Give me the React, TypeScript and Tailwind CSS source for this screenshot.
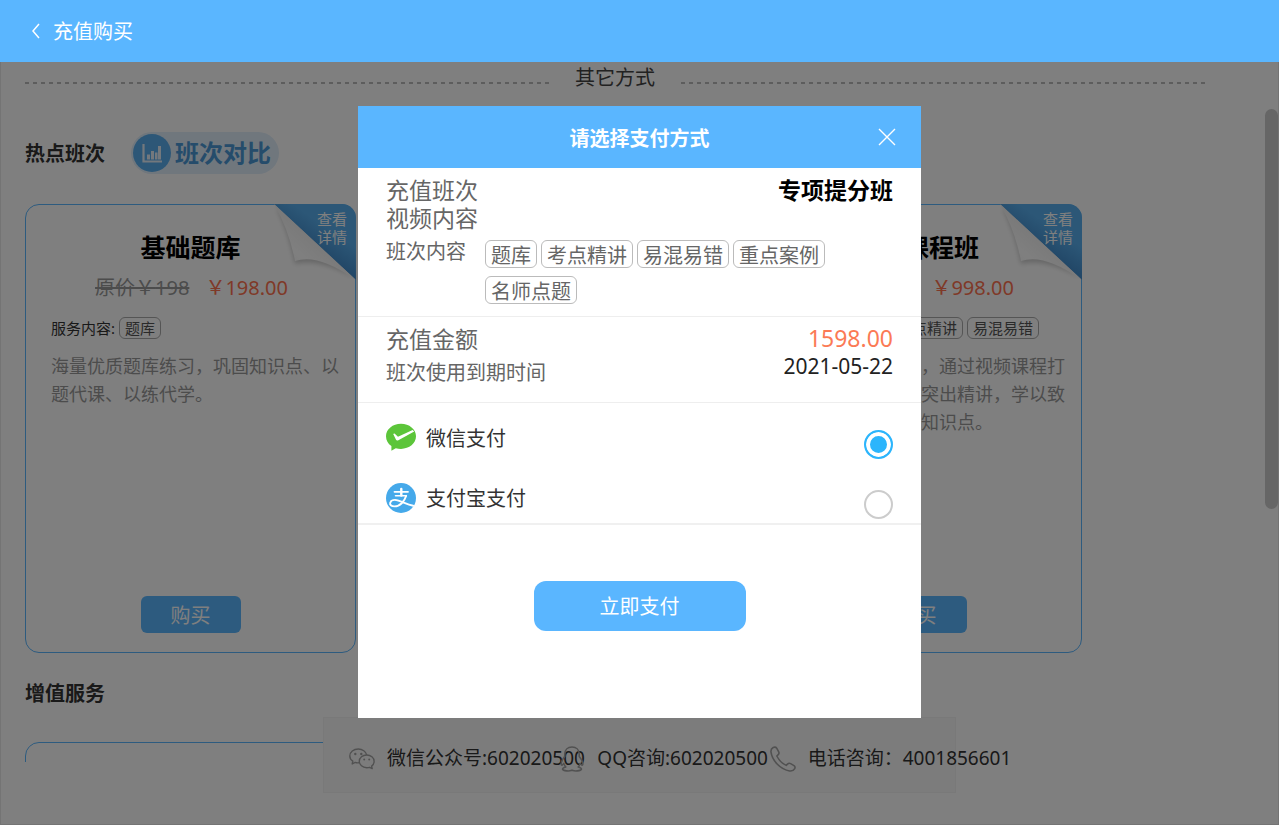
import React, { useState } from "react";

type Course = {
  title: string;
  original: string;
  price: string;
  tags: string[];
  description: string;
};

const courses: Course[] = [
  {
    title: "基础题库",
    original: "198",
    price: "198.00",
    tags: ["题库"],
    description: "海量优质题库练习，巩固知识点、以题代课、以练代学。",
  },
  {
    title: "专项提分班",
    original: "1598",
    price: "1598.00",
    tags: ["题库", "考点精讲"],
    description: "海量优质题库练习，巩固知识点。",
  },
  {
    title: "视频课程班",
    original: "998",
    price: "998.00",
    tags: ["题库", "考点精讲", "易混易错"],
    description:
      "海量优质题库练习，通过视频课程打下坚实理论基础，突出精讲，学以致用，全面系统掌握知识点。",
  },
];

const orderTags = ["题库", "考点精讲", "易混易错", "重点案例", "名师点题"];

function FoldedCorner() {
  return (
    <a href="#detail" className="absolute -top-px -right-px block h-[76px] w-[82px] text-white">
      <svg viewBox="0 0 82 76" className="h-full w-full" aria-hidden="true">
        <defs>
          <linearGradient id="fold" x1="0.55" y1="0.45" x2="0.2" y2="0.85">
            <stop offset="0" stopColor="#f2f2f2" />
            <stop offset="0.6" stopColor="#ffffff" />
            <stop offset="1" stopColor="#f8f8f8" />
          </linearGradient>
          <linearGradient id="ribbon" x1="0.4" y1="0.6" x2="0.62" y2="0.3">
            <stop offset="0" stopColor="#4088c8" />
            <stop offset="1" stopColor="#58aeee" />
          </linearGradient>
          <filter id="soft" x="-20%" y="-20%" width="140%" height="140%">
            <feGaussianBlur stdDeviation="2.5" />
          </filter>
        </defs>
        <path d="M2 3 Q15 28 21 60 Q46 54 80 74 Z" fill="#000" opacity="0.2" filter="url(#soft)" />
        <path d="M0 0 H68 A14 14 0 0 1 82 14 V76 Z" fill="url(#ribbon)" />
        <path d="M0 0 Q15 26 21 57 Q44 49 82 76 Z" fill="url(#fold)" />
      </svg>
      <span className="absolute top-[6px] right-[7px] w-8 text-[15px] leading-[18px]">查看详情</span>
    </a>
  );
}

function CourseCard({ course }: { course: Course }) {
  return (
    <article className="relative flex h-[449px] w-[331px] shrink-0 flex-col rounded-[14px] border border-[#5ab6ff] pt-6 pb-[19px]">
      <FoldedCorner />
      <h3 className="text-center text-[25px] leading-9 font-bold text-black">{course.title}</h3>
      <p className="mt-2 flex justify-center gap-4 pl-[2px] text-[20px] leading-[30px]">
        <s className="text-[#999]">原价￥{course.original}</s>
        <span className="text-[#ff7350]">￥{course.price}</span>
      </p>
      <div className="mt-[14px] flex items-center gap-1 pl-[25px] text-[15px] leading-5 text-[#555]">
        <span className="text-[#333]">服务内容:</span>
        {course.tags.map((tag) => (
          <span key={tag} className="rounded-[6px] border border-[#aaa] px-[5px]">
            {tag}
          </span>
        ))}
      </div>
      <p className="mt-[13px] pr-3 pl-[25px] text-[18px] leading-7 text-[#999]">{course.description}</p>
      <button
        type="button"
        className="mt-auto h-[37px] w-[100px] self-center rounded-[6px] bg-[#5ab6ff] pt-[2px] text-[20px] text-white"
      >
        购买
      </button>
    </article>
  );
}

function WechatIcon() {
  return (
    <svg viewBox="0 0 26 22" className="h-[22px] w-[26px]" fill="none" stroke="#a3a3a3" strokeWidth="1.4" strokeLinejoin="round" aria-hidden="true">
      <path d="M10 14.8 C8.7 15 7.2 14.8 6.2 14.4 L3.2 16 L3.8 13.2 C1.9 11.9 .8 10.1 .8 8 C.8 4.1 4.6 1 9.3 1 C13.5 1 17 3.6 17.7 7" />
      <path d="M17.7 7 C21.8 7 25.1 9.8 25.1 13.3 C25.1 15.3 24.2 16.9 22.6 18.1 L23.2 20.6 L20.6 19.3 C19.8 19.6 18.7 19.7 17.7 19.7 C13.6 19.7 10.3 16.8 10.3 13.3 C10.3 9.8 13.6 7 17.7 7 Z" />
      <g fill="#a3a3a3" stroke="none">
        <circle cx="6.3" cy="6" r="1.2" />
        <circle cx="12.3" cy="6" r="1.2" />
        <circle cx="15.2" cy="11.6" r="1" />
        <circle cx="20.2" cy="11.6" r="1" />
      </g>
    </svg>
  );
}

function QqIcon() {
  return (
    <svg viewBox="0 0 26 26" className="h-[26px] w-[26px]" fill="none" stroke="#a3a3a3" strokeWidth="1.6" strokeLinejoin="round" aria-hidden="true">
      <path d="M13 1 C8.6 1 5.8 4 5.8 8 V10.6 C3.6 13.2 2 16.2 2.2 18.4 C2.4 19.8 3.8 18.8 4.8 17.4 C5.2 18.8 5.9 20 6.8 21 C4.6 21.6 3.4 22.4 3.6 23.3 C4.1 25.2 11 25.2 12.200 24.400 H13.800 C15 25.2 21.9 25.2 22.4 23.3 C22.600 22.4 21.400 21.6 19.2 21 C20.1 20 20.8 18.8 21.2 17.4 C22.2 18.8 23.6 19.8 23.8 18.4 C24 16.2 22.4 13.2 20.2 10.6 V8 C20.2 4 17.4 1 13 1 Z" />
    </svg>
  );
}

function PhoneIcon() {
  return (
    <svg viewBox="0 0 26 26" className="h-[26px] w-[26px]" fill="none" stroke="#a3a3a3" strokeWidth="1.6" strokeLinejoin="round" aria-hidden="true">
      <path d="M3.2 1.5 C1.6 2.3 .7 3.9 1 6.2 C2.2 14.8 10.6 23.6 19.6 25 C22 25.3 23.8 24.4 24.7 22.7 C25.3 21.4 25.1 20.4 24 19.6 L20.6 17.6 C19.4 17 18.4 17.2 17.5 18.1 L16.2 19.4 C12.4 17.6 8.8 14 6.8 10 L8.2 8.6 C9 7.8 9.2 6.8 8.7 5.8 L6.7 2.2 C5.9 1 4.7 .8 3.2 1.5 Z" />
    </svg>
  );
}

function WechatPayIcon() {
  return (
    <svg viewBox="0 0 30 30" className="h-[30px] w-[30px]" aria-hidden="true">
      <path
        d="M15 .8 C23.3 .8 30 6.3 30 13.300 C30 20.3 23.3 25.9 15 25.9 C13.2 25.9 11.4 25.6 9.8 25.200 L5.4 27.7 L5.4 23.1 C2 20.9 0 17.3 0 13.3 C0 6.3 6.7 .8 15 .8 Z"
        fill="#5cc53a"
      />
      <path d="M7.200 11 Q8.400 10 9.600 11.400 L12 13.800 L26.600 7 L28.200 8.600 L12.400 17.200 Q10.600 18.200 9.900 16.400 Z" fill="#fff" />
    </svg>
  );
}

function AlipayIcon() {
  return (
    <svg viewBox="0 0 30 30" className="h-[30px] w-[30px]" fill="none" aria-hidden="true">
      <circle cx="15" cy="15" r="15" fill="#45a9ea" />
      <g stroke="#fff" strokeLinecap="round">
        <path d="M8.500 8.800 H22" strokeWidth="1.8" />
        <path d="M15.300 6 V12.600" strokeWidth="2.4" />
        <path d="M9.500 12.800 H20.200" strokeWidth="1.6" />
        <path
          d="M20.200 12.800 C18.400 18.500 14 23.400 8.600 23.400 C5 23.400 3.600 21.600 4.200 19.700 C5 17.200 8.600 16.400 12.400 17.600 C17 19 21 21.400 27.200 22.800"
          strokeWidth="1.9"
          strokeLinejoin="round"
        />
      </g>
    </svg>
  );
}

function PayOption({
  label,
  icon,
  checked,
  onChange,
}: {
  label: string;
  icon: React.ReactNode;
  checked: boolean;
  onChange: () => void;
}) {
  return (
    <label className="flex h-[60px] items-start pt-5 text-[20px] leading-8 text-[#333]">
      {icon}
      <span className="ml-[10px] flex-1">{label}</span>
      <input
        type="radio"
        name="pay"
        checked={checked}
        onChange={onChange}
        className="mt-[7px] h-[29px] w-[29px] appearance-none rounded-full border-2 border-[#ccc] bg-white checked:border-[#2cb5fc] checked:bg-[#2cb5fc] checked:shadow-[inset_0_0_0_4px_#fff]"
      />
    </label>
  );
}

function PayDialog() {
  const [method, setMethod] = useState("wechat");
  return (
    <section
      role="dialog"
      aria-label="请选择支付方式"
      className="w-[563px] max-w-full self-start bg-white pb-[87px]"
    >
      <header className="grid h-[62px] grid-cols-[1fr_auto_1fr] items-center bg-[#5ab6ff] px-6 text-white">
        <h2 className="col-start-2 pt-[3px] text-[20px] font-bold">请选择支付方式</h2>
        <button type="button" aria-label="关闭" className="justify-self-end">
          <svg viewBox="0 0 20 20" className="h-5 w-5" stroke="currentColor" strokeWidth="1.4" aria-hidden="true">
            <path d="M2 2 L18 18 M18 2 L2 18" />
          </svg>
        </button>
      </header>

      <div className="border-b border-[#eee] px-7 pt-2 pb-3 text-[#666]">
        <div className="flex justify-between text-[23px] leading-7">
          <span>充值班次</span>
          <strong className="text-black">专项提分班</strong>
        </div>
        <div className="text-[23px] leading-7">视频内容</div>
        <div className="mt-2 flex text-[20px]">
          <span className="w-[99px] shrink-0 leading-6">班次内容</span>
          <ul className="flex flex-wrap gap-x-1 gap-y-2">
            {orderTags.map((tag) => (
              <li key={tag} className="h-7 rounded-[6px] border border-[#bbb] px-[5px] leading-[30px]">
                {tag}
              </li>
            ))}
          </ul>
        </div>
      </div>

      <div className="flex justify-between border-b border-[#eee] px-7 pt-[5px] pb-3">
        <div className="leading-[34px] text-[#666]">
          <div className="text-[23px]">充值金额</div>
          <div className="text-[20px]">班次使用到期时间</div>
        </div>
        <div className="pt-[2px] text-right leading-7">
          <div className="text-[23px] text-[#fb7a55]">1598.00</div>
          <div className="text-[21px] text-[#222]">2021-05-22</div>
        </div>
      </div>

      <div className="border-b-2 border-[#f0f0f0] px-7">
        <PayOption
          label="微信支付"
          icon={<WechatPayIcon />}
          checked={method === "wechat"}
          onChange={() => setMethod("wechat")}
        />
        <PayOption
          label="支付宝支付"
          icon={<AlipayIcon />}
          checked={method === "alipay"}
          onChange={() => setMethod("alipay")}
        />
      </div>

      <button
        type="button"
        className="mx-auto mt-14 block h-[50px] w-[212px] rounded-[12px] bg-[#5ab6ff] pt-[2px] text-[20px] text-white"
      >
        立即支付
      </button>
    </section>
  );
}

function Dashes() {
  return (
    <span className="mt-[10px] h-[2px] flex-1 bg-[repeating-linear-gradient(90deg,#bbb_0_4px,transparent_4px_8px)]" />
  );
}

export default function App() {
  return (
    <div className="flex h-screen flex-col overflow-hidden bg-white font-['Noto_Sans','Noto_Sans_CJK_SC',sans-serif]">
      <header className="flex h-[62px] shrink-0 items-center bg-[#5ab6ff] px-[30px] pt-[2px] text-white">
        <a href="#back" className="flex items-center gap-3 text-[20px]">
          <svg viewBox="0 0 11 18" className="h-[18px] w-[11px]" fill="none" stroke="currentColor" strokeWidth="1.5" aria-hidden="true">
            <path d="M9 1 L3 8 L9 15" />
          </svg>
          充值购买
        </a>
      </header>

      <div className="relative flex min-h-0 flex-1 border-x border-b border-[#e8e8e8]">
        <main className="mb-[62px] min-w-0 flex-1 overflow-hidden pr-[60px] pl-6">
          <div className="flex items-center gap-[26px] text-[20px] leading-8 text-[#444]">
            <Dashes />
            其它方式
            <Dashes />
          </div>

          <div className="mt-[38px] flex items-center gap-[26px]">
            <h2 className="pt-[2px] text-[20px] font-bold text-[#333]">热点班次</h2>
            <a
              href="#compare"
              className="flex h-[42px] items-center gap-1 rounded-full bg-[#e0eefb] pr-2 pl-[2px] text-[24px] font-bold text-[#4a98d6]"
            >
              <svg viewBox="0 0 38 38" className="h-[38px] w-[38px]" aria-hidden="true">
                <circle cx="19" cy="19" r="19" fill="#5aaeee" />
                <path d="M10.5 10 V27.5 H29" fill="none" stroke="#e6f0fa" strokeWidth="2.2" />
                <path
                  d="M14 20.5 h3 v5 h-3z M18 17 h3 v8.500 h-3z M22 18.500 h2.500 v7 h-2.500z M25 12 h3 v13.500 h-3z"
                  fill="#e6f0fa"
                />
              </svg>
              班次对比
            </a>
          </div>

          <div className="mt-[30px] flex gap-8">
            {courses.map((course) => (
              <CourseCard key={course.title} course={course} />
            ))}
          </div>

          <h2 className="mt-[26px] text-[20px] leading-[30px] font-bold text-[#333]">增值服务</h2>
          <div className="mt-[33px] h-[449px] w-[331px] rounded-[14px] border border-[#5ab6ff]" />
        </main>

        <div className="w-[13px] shrink-0 pt-[47px]">
          <div className="h-[400px] rounded-full bg-[#ccc]" />
        </div>

        <footer className="absolute inset-x-0 bottom-[31px] flex justify-center text-[19px] text-[#333]">
          <ul className="grid h-[76px] w-[633px] grid-cols-3 items-center border border-[#f3f3f3] bg-[#f9f9f9] pt-[7px] whitespace-nowrap">
            <li className="flex items-center gap-3 pl-[25px]">
              <span className="w-[26px] shrink-0"><WechatIcon /></span>
              微信公众号:602020500
            </li>
            <li className="flex items-center gap-3 pl-[25px]">
              <span className="w-[26px] shrink-0"><QqIcon /></span>
              QQ咨询:602020500
            </li>
            <li className="flex items-center gap-3 pl-[25px]">
              <span className="w-[26px] shrink-0"><PhoneIcon /></span>
              电话咨询：4001856601
            </li>
          </ul>
        </footer>

        <div className="absolute -inset-x-px top-0 -bottom-px flex justify-center bg-black/50 pt-11">
          <PayDialog />
        </div>
      </div>
    </div>
  );
}
